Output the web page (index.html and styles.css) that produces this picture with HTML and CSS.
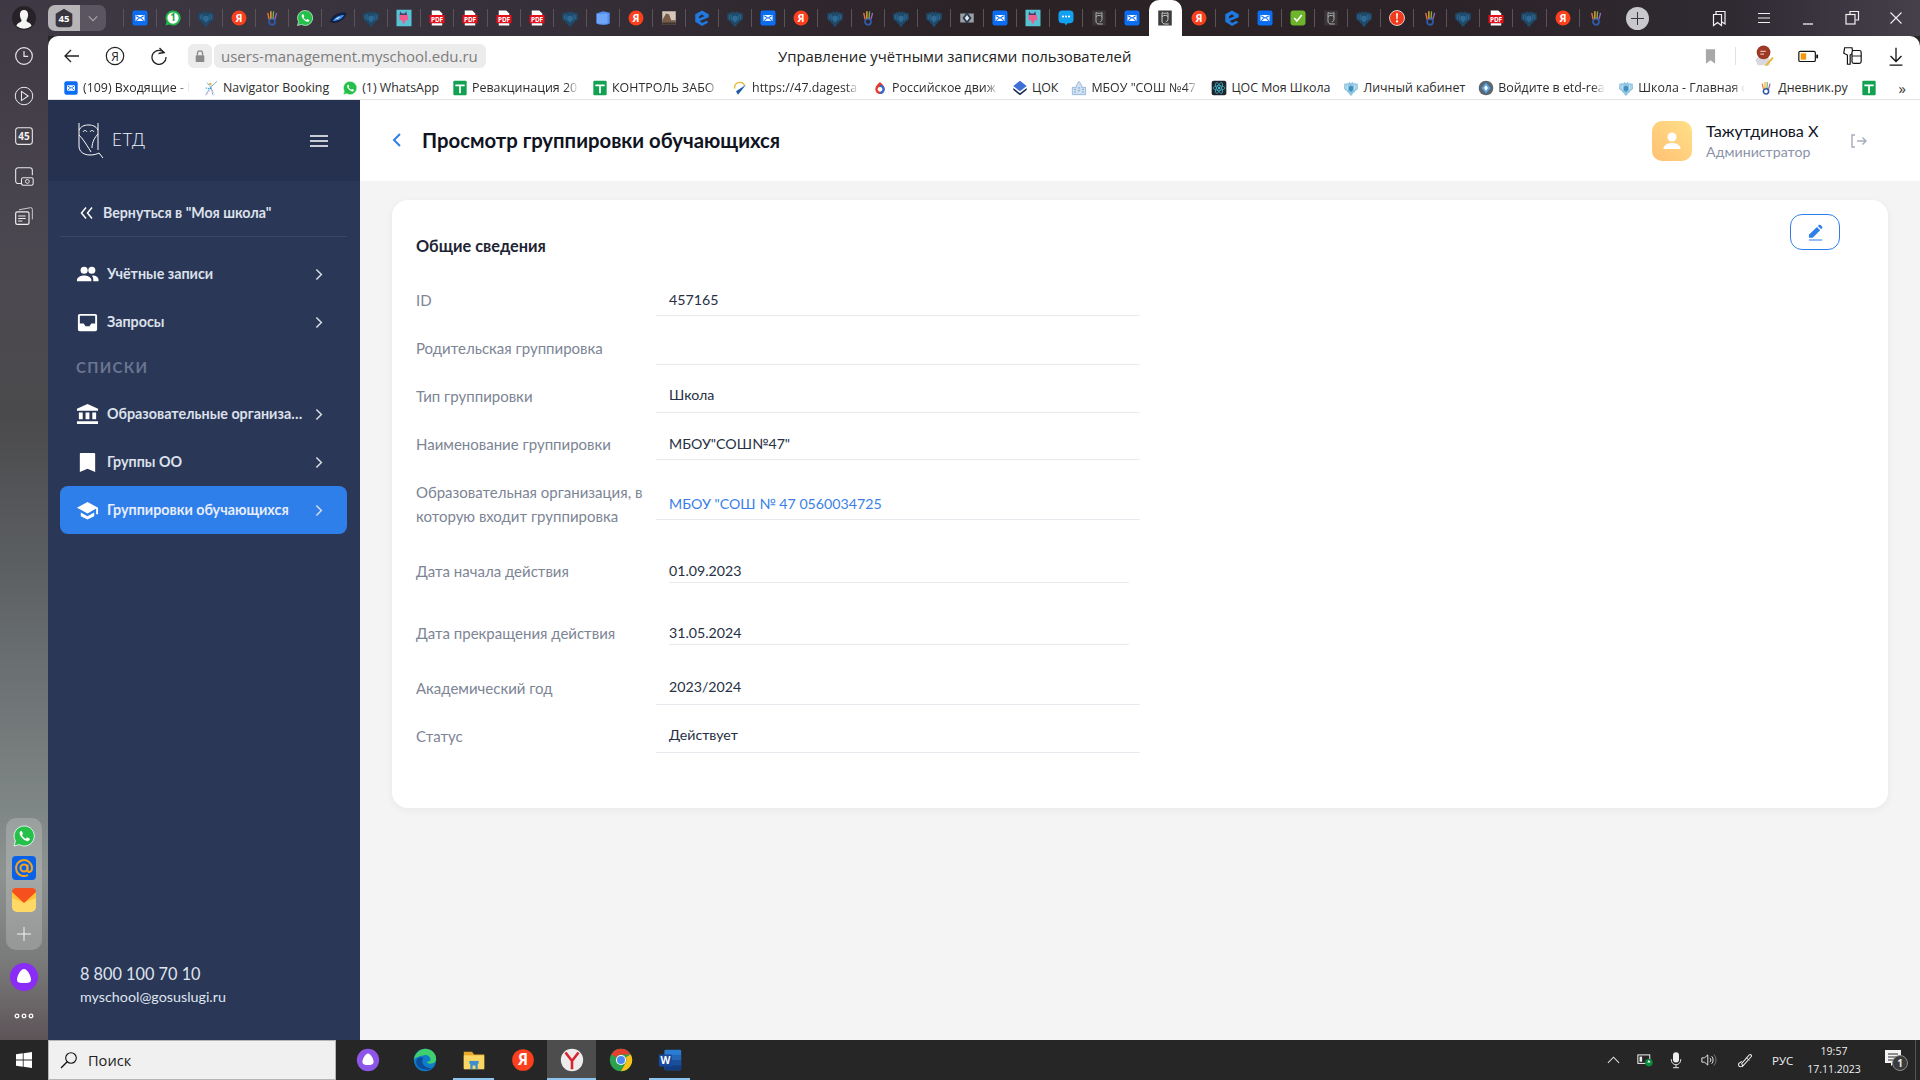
FILE: index.html
```html
<!DOCTYPE html>
<html lang="ru">
<head>
<meta charset="utf-8">
<title>Управление учётными записями пользователей</title>
<link rel="stylesheet" href="styles.css">
</head>
<body>
<svg class="sprite" xmlns="http://www.w3.org/2000/svg">
  <symbol id="mail" viewBox="0 0 24 24"><rect x="2" y="2" width="20" height="20" rx="3" fill="#0b6df2"/><path d="M6 8h12v8H6z" fill="#fff"/><path d="M7 9l5 3.2L17 9M7 15.500l3.200-3M17 15.500l-3.200-3" fill="none" stroke="#0b6df2" stroke-width="1.400"/></symbol>
  <symbol id="wa" viewBox="0 0 24 24"><path d="M12 2a10 10 0 0 0-8.600 15L2 22l5.200-1.400A10 10 0 1 0 12 2z" fill="#25c04a" stroke="#fff" stroke-width=".8"/><path d="M8.800 7c-.6.300-1.400 1.300-1.200 2.800.3 2 3.900 6.600 7.300 7.300 1.400.2 2.500-.6 2.900-1.500.2-.5 0-1-.3-1.100l-2-1c-.4-.1-.7 0-.9.300l-.7.900c-1.500-.5-3.200-2.100-3.900-3.700l.7-.8c.2-.3.2-.6.100-.9l-.9-2c-.2-.4-.6-.4-1.100-.3z" fill="#fff"/></symbol>
  <symbol id="wa1" viewBox="0 0 24 24"><path d="M12 2a10 10 0 0 0-8.600 15L2 22l5.200-1.400A10 10 0 1 0 12 2z" fill="#25b84a"/><circle cx="12" cy="12" r="7.500" fill="#fff"/><text x="12" y="16.500" text-anchor="middle" class="svgt" font-size="13" font-weight="700" fill="#1f9e3e">1</text></symbol>
  <symbol id="gerb" viewBox="0 0 24 24"><path d="M9 2.500l3 2.500 3-2.500 .5 3L18 4l1.500 2L22 5l.5 8-2 2.500-2 .5-1.500 3-2 .5-1 3-2 1-2-1-1-3-2-.5L5.500 16l-2-.5-2-2.500L2 5l2.500 1L6 4l2.500 1.500z" fill="#1f4a6a"/><path d="M12 8.500l3.500 1.500v4.500L12 18l-3.500-3.500V10z" fill="#2f6a94"/><path d="M4.500 8v5.500M7 7v8M17 7v8M19.500 8v5.500" stroke="#35709a" stroke-width="1"/></symbol>
  <symbol id="gerbl" viewBox="0 0 24 24"><path d="M9 2.500l3 2.500 3-2.500 .5 3L18 4l1.500 2L22 5l.5 8-2 2.500-2 .5-1.500 3-2 .5-1 3-2 1-2-1-1-3-2-.5L5.500 16l-2-.5-2-2.500L2 5l2.500 1L6 4l2.500 1.500z" fill="#8cc4e0"/><path d="M12 8.500l3.500 1.500v4.500L12 18l-3.500-3.500V10z" fill="#3f8fc0"/><path d="M4.500 8v5.500M7 7v8M17 7v8M19.500 8v5.500" stroke="#e8f4fa" stroke-width="1"/></symbol>
  <symbol id="ya" viewBox="0 0 24 24"><circle cx="12" cy="12" r="10" fill="#fc3f1d"/><text x="12" y="17" text-anchor="middle" class="svgt" font-size="14" font-weight="700" fill="#fff">Я</text></symbol>
  <symbol id="hand" viewBox="0 0 24 24"><circle cx="12" cy="17" r="4" fill="none" stroke="#2f5aa8" stroke-width="2.400"/><path d="M8 13L6.500 6" stroke="#e8743b" stroke-width="1.800" stroke-linecap="round"/><path d="M10.500 12V3.500" stroke="#e9b23c" stroke-width="1.800" stroke-linecap="round"/><path d="M13.500 12l.5-8" stroke="#7bb04a" stroke-width="1.800" stroke-linecap="round"/><path d="M16 13l2-7" stroke="#9a63b5" stroke-width="1.800" stroke-linecap="round"/></symbol>
  <symbol id="blob" viewBox="0 0 24 24"><path d="M1 17C3 9 12 3 23 5c1 4-5 11-12 13-4 1-8 .5-10-1z" fill="#12213f"/><path d="M5 16c3-5 9-8 15-8-2 5-8 8-15 8z" fill="#3a8df5"/><path d="M8 14c2-2 5-3 7-4-1 2-4 3.500-7 4z" fill="#fff"/></symbol>
  <symbol id="pink" viewBox="0 0 24 24"><rect x="2" y="1" width="20" height="22" fill="#58c3d4"/><path d="M6 8h11l1 7h-4l-2 6-3-6H6z" fill="#ef5d8c"/><path d="M7 3l2 3h4l2-3 1 5H6z" fill="#4b3a66"/></symbol>
  <symbol id="pdf" viewBox="0 0 24 24"><path d="M5 2h10l4 4v5H5z" fill="#fff"/><rect x="2" y="8" width="20" height="11" fill="#e2111c"/><path d="M5 19h14v3H5z" fill="#fff"/><text x="12" y="17" text-anchor="middle" class="svgt" font-size="8.500" font-weight="700" fill="#fff">PDF</text></symbol>
  <symbol id="box" viewBox="0 0 24 24"><path d="M3 6l9-3 9 2v14c-3 3-14 3-18 0z" fill="#4f8ff0"/><path d="M4 7l14-1v13c-4 1-10 1-14 0z" fill="#6fa6f7"/></symbol>
  <symbol id="photo" viewBox="0 0 24 24"><rect x="3" y="3" width="18" height="18" fill="#d4c7b8"/><path d="M3 15l5-9 4 1 3 8h6v6H3z" fill="#7a5c4a"/><rect x="3" y="18" width="18" height="3" fill="#3e3330"/></symbol>
  <symbol id="edu" viewBox="0 0 24 24"><path d="M12 2l9 5v4L9 16l3 2.500 6-3 2.500 2.500L12 22.500 3 17V7zM8 10v2.500l7-3L12 7z" fill="#1f79e0"/></symbol>
  <symbol id="cam" viewBox="0 0 24 24"><path d="M3 6h18v12H3z" fill="#9aa1a6"/><path d="M12 4l6 8-6 8-6-8z" fill="#2a3b4c"/><path d="M12 8l3 4-3 4-3-4z" fill="#dfe8ee"/></symbol>
  <symbol id="chat" viewBox="0 0 24 24"><path d="M7 2h10a5 5 0 0 1 5 5v7a5 5 0 0 1-5 5h-3l-2 3-2-3H7a5 5 0 0 1-5-5V7a5 5 0 0 1 5-5z" fill="#12a0f0"/><g fill="#fff"><circle cx="8" cy="10" r="1.400"/><circle cx="12" cy="10" r="1.400"/><circle cx="16" cy="10" r="1.400"/></g></symbol>
  <symbol id="owlg" viewBox="0 0 24 24"><rect x="3" y="2" width="18" height="20" fill="#3a3638"/><path d="M8 5v11c0 3 2 4 4 4h5M8 5c3 1 6 1 8 0v8c0 2-1 4-3 4M8 10c3-2 6-2 8 0" fill="none" stroke="#bbb" stroke-width="1.200"/></symbol>
  <symbol id="owlw" viewBox="0 0 24 24"><rect x="3" y="2" width="18" height="20" fill="#3c3c3c"/><path d="M8 5v11c0 3 2 4 4 4h5M8 5c3 1 6 1 8 0v8c0 2-1 4-3 4M8 10c3-2 6-2 8 0" fill="none" stroke="#ddd" stroke-width="1.200"/></symbol>
  <symbol id="check" viewBox="0 0 24 24"><rect x="2" y="2" width="20" height="20" rx="4" fill="#6eb52c"/><path d="M7 12l3.500 4L17 8" fill="none" stroke="#fff" stroke-width="2"/></symbol>
  <symbol id="alert" viewBox="0 0 24 24"><circle cx="12" cy="12" r="10" fill="#f03a1e" stroke="#fff" stroke-width="1"/><path d="M10.800 5.500h2.400l-.4 8h-1.600z" fill="#fff"/><circle cx="12" cy="16.500" r="1.500" fill="#fff"/></symbol>
  <symbol id="sheet" viewBox="0 0 24 24"><rect x="2" y="1" width="20" height="22" rx="1.500" fill="#12a150"/><path d="M5 8h14M12 8v12" stroke="#fff" stroke-width="2.600"/></symbol>
  <symbol id="nav" viewBox="0 0 24 24"><path d="M4 22l7-11M11 11l10-9M12 11l3 12M6 4l6 7M12 13l-8-1" stroke="#2f9fd8" stroke-width="1.500" stroke-dasharray="2 1" fill="none"/><path d="M5 23l6-9M12 10l7-6M13 13l4 9" stroke="#e0568a" stroke-width="1.300" stroke-dasharray="1 2" fill="none"/><circle cx="11" cy="6" r="2" fill="#e6b93a"/></symbol>
  <symbol id="dag" viewBox="0 0 24 24"><path d="M4 13a8 8 0 0 1 15-5" fill="none" stroke="#e6b93a" stroke-width="2"/><path d="M21 7L9 22l-3-5z" fill="#1f5aa8"/></symbol>
  <symbol id="rdd" viewBox="0 0 24 24"><path d="M12 3c5 4 7 7 7 11a7 7 0 0 1-14 0c0-4 2-7 7-11z" fill="#e23b2e"/><path d="M12 7a7 7 0 0 1 7 7 7 7 0 0 1-7 7z" fill="#2f6bd0"/><circle cx="12" cy="14" r="3.500" fill="#fff"/></symbol>
  <symbol id="cok" viewBox="0 0 24 24"><path d="M12 1l10 8-10 8L2 9z" fill="#3d6fd6"/><path d="M2 12l10 8 10-8v3l-10 8-10-8z" fill="#1a2a4a"/></symbol>
  <symbol id="school" viewBox="0 0 24 24"><path d="M12 2l4 6v3h6v11H2V11h6V8z" fill="#cfe0f2" stroke="#7aa5d0" stroke-width="1"/><path d="M5 14h2M5 18h2M11 12h2M11 16h2M17 14h2M17 18h2" stroke="#5b8bbd" stroke-width="1.500"/></symbol>
  <symbol id="react" viewBox="0 0 24 24"><rect x="1" y="1" width="22" height="22" rx="3" fill="#20242c"/><g fill="none" stroke="#45c4d8" stroke-width="1"><ellipse cx="12" cy="12" rx="9" ry="3.500"/><ellipse cx="12" cy="12" rx="9" ry="3.500" transform="rotate(60 12 12)"/><ellipse cx="12" cy="12" rx="9" ry="3.500" transform="rotate(120 12 12)"/></g><circle cx="12" cy="12" r="1.800" fill="#45c4d8"/></symbol>
  <symbol id="etd" viewBox="0 0 24 24"><circle cx="12" cy="12" r="11" fill="#5c6670"/><path d="M12 4l7 8-7 8-7-8z" fill="#5aa4e0"/><path d="M12 8l3 4-3 4-3-4z" fill="#fff"/></symbol>
  <symbol id="chev" viewBox="0 0 24 24"><path d="M9 5l7 7-7 7" fill="none" stroke="currentColor" stroke-width="2.200"/></symbol>
</svg>

<div class="screen">
  <div class="workspace">
    <aside class="rail">
      <div class="rail-top">
        <svg class="r-avatar" viewBox="0 0 24 24"><circle cx="12" cy="12" r="12" fill="#262228"/><path d="M12 4c-3 0-4.500 2.500-4 6 .3 2 1 3 1.500 4l-.2 1.500C7 17 5 17 4.500 20A12 12 0 0 0 19.500 20c-.5-3-2.500-3-4.800-4.500L14.500 14c.5-1 1.200-2 1.500-4 .5-3.500-1-6-4-6z" fill="#f4f4f4"/></svg>
        <svg class="r-ic" viewBox="0 0 24 24"><circle cx="12" cy="12" r="10" fill="none" stroke="#e8e8e8" stroke-width="1.400"/><path d="M12 6v6.500h5" fill="none" stroke="#e8e8e8" stroke-width="1.400"/></svg>
        <svg class="r-ic" viewBox="0 0 24 24"><circle cx="12" cy="12" r="10.500" fill="none" stroke="#e8e8e8" stroke-width="1.200"/><path d="M9 6.500l8 5.500-8 5.500z" fill="none" stroke="#e8e8e8" stroke-width="1.300"/></svg>
        <svg class="r-ic" viewBox="0 0 24 24"><rect x="2" y="2" width="20" height="20" rx="3" fill="none" stroke="#e8e8e8" stroke-width="1.300"/><text x="12" y="16.500" text-anchor="middle" class="svgt" font-size="12" font-weight="700" fill="#f0f0f0">45</text></svg>
        <svg class="r-ic" viewBox="0 0 24 24"><path d="M9 21H5a3 3 0 0 1-3-3V5a3 3 0 0 1 3-3h14a3 3 0 0 1 3 3v6" fill="none" stroke="#e8e8e8" stroke-width="1.300"/><rect x="9" y="14" width="14" height="9" rx="2" fill="none" stroke="#e8e8e8" stroke-width="1.300"/><circle cx="16" cy="18.500" r="2.300" fill="none" stroke="#e8e8e8" stroke-width="1.200"/></svg>
        <svg class="r-ic" viewBox="0 0 24 24"><rect x="2" y="7" width="16" height="15" rx="2" fill="none" stroke="#f0f0f0" stroke-width="1.400"/><path d="M6 4.500l14-2.500a2 2 0 0 1 2 2v12" fill="none" stroke="#d8d8d8" stroke-width="1.100"/><path d="M5 12h9M5 15h9M5 18h5" stroke="#f0f0f0" stroke-width="1.200"/></svg>
      </div>
      <div class="rail-bottom">
        <div class="dock">
          <svg class="d-ic"><use href="#wa"/></svg>
          <svg class="d-ic" viewBox="0 0 24 24"><rect width="24" height="24" rx="4" fill="#0a62e8"/><circle cx="12" cy="12" r="3.500" fill="none" stroke="#f7a21b" stroke-width="2"/><path d="M15.500 8.500V14c0 3 4.500 2.500 4.500-2a8 8 0 1 0-4 7" fill="none" stroke="#f7a21b" stroke-width="2"/></svg>
          <svg class="d-ic" viewBox="0 0 24 24"><rect width="24" height="24" rx="5" fill="#ffd966"/><path d="M0 5a5 5 0 0 1 5-5h14a5 5 0 0 1 5 5v5l-12 5L0 10z" fill="#ffc23a"/><path d="M0 4a4 4 0 0 1 4-4h16a4 4 0 0 1 4 4L12 15z" fill="#f5501e"/></svg>
          <svg class="d-plus" viewBox="0 0 16 16"><path d="M8 0v16M0 8h16" stroke="#fff" stroke-width="1"/></svg>
        </div>
        <svg class="alice" viewBox="0 0 28 28"><circle cx="14" cy="14" r="14" fill="#8a2cf5"/><path d="M14 6c3.500 0 7 7 7 10.500S18 20 14 20s-7 0-7-3.500S10.500 6 14 6z" fill="#fff"/></svg>
        <svg class="r-dots" viewBox="0 0 20 6"><g fill="none" stroke="#fff" stroke-width="1.300"><circle cx="3" cy="3" r="1.800"/><circle cx="10" cy="3" r="1.800"/><circle cx="17" cy="3" r="1.800"/></g></svg>
      </div>
    </aside>

    <div class="browser">
      <div class="tabstrip">
        <div class="tabs-counter">
          <span class="tc-main"><svg viewBox="0 0 24 24"><path d="M12 1l10 6v12a4 4 0 0 1-4 4H6a4 4 0 0 1-4-4V7z" fill="#3a3640"/><text x="12" y="17" text-anchor="middle" class="svgt" font-size="11.500" font-weight="700" fill="#fff">45</text></svg></span>
          <span class="tc-more"><svg viewBox="0 0 12 8"><path d="M1 1.500l5 5 5-5" fill="none" stroke="#a8a6aa" stroke-width="1.400"/></svg></span>
        </div>
        <div class="tabs">
          <span class="tab"><svg><use href="#mail"/></svg></span>
          <span class="tab"><svg><use href="#wa1"/></svg></span>
          <span class="tab"><svg><use href="#gerb"/></svg></span>
          <span class="tab"><svg><use href="#ya"/></svg></span>
          <span class="tab"><svg><use href="#hand"/></svg></span>
          <span class="tab"><svg><use href="#wa"/></svg></span>
          <span class="tab"><svg><use href="#blob"/></svg></span>
          <span class="tab"><svg><use href="#gerb"/></svg></span>
          <span class="tab"><svg><use href="#pink"/></svg></span>
          <span class="tab"><svg><use href="#pdf"/></svg></span>
          <span class="tab"><svg><use href="#pdf"/></svg></span>
          <span class="tab"><svg><use href="#pdf"/></svg></span>
          <span class="tab"><svg><use href="#pdf"/></svg></span>
          <span class="tab"><svg><use href="#gerb"/></svg></span>
          <span class="tab"><svg><use href="#box"/></svg></span>
          <span class="tab"><svg><use href="#ya"/></svg></span>
          <span class="tab"><svg><use href="#photo"/></svg></span>
          <span class="tab"><svg><use href="#edu"/></svg></span>
          <span class="tab"><svg><use href="#gerb"/></svg></span>
          <span class="tab"><svg><use href="#mail"/></svg></span>
          <span class="tab"><svg><use href="#ya"/></svg></span>
          <span class="tab"><svg><use href="#gerb"/></svg></span>
          <span class="tab"><svg><use href="#hand"/></svg></span>
          <span class="tab"><svg><use href="#gerb"/></svg></span>
          <span class="tab"><svg><use href="#gerb"/></svg></span>
          <span class="tab"><svg><use href="#cam"/></svg></span>
          <span class="tab"><svg><use href="#mail"/></svg></span>
          <span class="tab"><svg><use href="#pink"/></svg></span>
          <span class="tab"><svg><use href="#chat"/></svg></span>
          <span class="tab"><svg><use href="#owlg"/></svg></span>
          <span class="tab tab-pre"><svg><use href="#mail"/></svg></span>
          <span class="tab tab-active"><svg><use href="#owlw"/></svg></span>
          <span class="tab tab-post"><svg><use href="#ya"/></svg></span>
          <span class="tab"><svg><use href="#edu"/></svg></span>
          <span class="tab"><svg><use href="#mail"/></svg></span>
          <span class="tab"><svg><use href="#check"/></svg></span>
          <span class="tab"><svg><use href="#owlg"/></svg></span>
          <span class="tab"><svg><use href="#gerb"/></svg></span>
          <span class="tab"><svg><use href="#alert"/></svg></span>
          <span class="tab"><svg><use href="#hand"/></svg></span>
          <span class="tab"><svg><use href="#gerb"/></svg></span>
          <span class="tab"><svg><use href="#pdf"/></svg></span>
          <span class="tab"><svg><use href="#gerb"/></svg></span>
          <span class="tab"><svg><use href="#ya"/></svg></span>
          <span class="tab"><svg><use href="#hand"/></svg></span>
        </div>
        <span class="newtab"><svg viewBox="0 0 14 14"><path d="M7 0v14M0 7h14" stroke="#3a3640" stroke-width="1.100"/></svg></span>
        <div class="winctl">
          <svg viewBox="0 0 18 18"><path d="M5 5V2.500h9V15l-3-2" fill="none" stroke="#f0f0f0" stroke-width="1.200"/><path d="M2.500 5.500h8v11l-4-3-4 3z" fill="#2d2630" stroke="#f0f0f0" stroke-width="1.200"/></svg>
          <svg viewBox="0 0 18 18"><path d="M3 4.500h12M3 9h12M3 13.500h12" stroke="#f0f0f0" stroke-width="1.200"/></svg>
          <svg viewBox="0 0 18 18"><path d="M4 15h10" stroke="#f0f0f0" stroke-width="1.300"/></svg>
          <svg viewBox="0 0 18 18"><path d="M7 5V2.500h8.500V11H12.500" fill="none" stroke="#f0f0f0" stroke-width="1.200"/><rect x="3" y="5.500" width="9" height="9.500" fill="none" stroke="#f0f0f0" stroke-width="1.200"/></svg>
          <svg viewBox="0 0 18 18"><path d="M3.500 3.500l11 11M14.500 3.500l-11 11" stroke="#f0f0f0" stroke-width="1.100"/></svg>
        </div>
      </div>

      <div class="pagewrap">
        <div class="toolbar">
          <svg class="tb-ic tb-back" viewBox="0 0 18 18"><path d="M16 9H2M8 3L2 9l6 6" fill="none" stroke="#222" stroke-width="1.300"/></svg>
          <svg class="tb-ic tb-ya" viewBox="0 0 20 20"><circle cx="10" cy="10" r="8.700" fill="none" stroke="#222" stroke-width="1.200"/><text x="10" y="14.500" text-anchor="middle" class="svgt" font-size="12" fill="#222">Я</text></svg>
          <svg class="tb-ic tb-re" viewBox="0 0 18 18"><path d="M14.500 6A7 7 0 1 0 16 10" fill="none" stroke="#222" stroke-width="1.300"/><path d="M9.500 1l4.500 4.500-5.500 1" fill="none" stroke="#222" stroke-width="1.300"/></svg>
          <span class="lock"><svg viewBox="0 0 14 16"><path d="M4 7V5a3 3 0 0 1 6 0v2" fill="none" stroke="#8a8a8a" stroke-width="1.500"/><rect x="2" y="7" width="10" height="8" rx="1" fill="#8a8a8a"/></svg></span>
          <span class="url">users-management.myschool.edu.ru</span>
          <div class="pagetitle">Управление учётными записями пользователей</div>
          <div class="tb-right">
            <svg class="tb-mark" viewBox="0 0 12 16"><path d="M1 0h10v16l-5-4-5 4z" fill="#a8a8a8"/></svg>
            <span class="tb-sep"></span>
            <svg class="tb-ext" viewBox="0 0 24 24"><path d="M3 17c0-3 2-3 4-3h8c2 0 3 1 3 3v5H5z" fill="#d8d8de"/><circle cx="11.500" cy="8" r="7.500" fill="#9c3a26"/><path d="M8 7h6M8 10h4" stroke="#e9b7a5" stroke-width="1.200"/><path d="M14 21l7-8 1.500 1.500-7 8-2.500.5z" fill="#e8b730"/></svg>
            <svg class="tb-ext" viewBox="0 0 24 24"><rect x="2" y="7" width="18" height="11" rx="1.500" fill="#fff" stroke="#111" stroke-width="1.300"/><rect x="4" y="9" width="6" height="7" fill="#f29a0e"/><rect x="21" y="10.500" width="2" height="4" fill="#111"/></svg>
            <svg class="tb-ext" viewBox="0 0 24 24"><path d="M4 3h8l1 6-3 2v10H7V11L3 9z" fill="none" stroke="#111" stroke-width="1.300"/><rect x="12" y="6" width="10" height="14" rx="2" fill="#fff" stroke="#111" stroke-width="1.300"/><path d="M12 12h10" stroke="#111" stroke-width="1"/></svg>
            <svg class="tb-ext" viewBox="0 0 24 24"><path d="M12 3v15M6 12l6 6 6-6M5 22h14" fill="none" stroke="#111" stroke-width="1.400"/></svg>
          </div>
        </div>
        <div class="bookmarks">
          <a class="bm"><svg><use href="#mail"/></svg><span class="bm-t fade">(109) Входящие - П</span></a>
          <a class="bm"><svg><use href="#nav"/></svg><span class="bm-t">Navigator Booking</span></a>
          <a class="bm"><svg><use href="#wa"/></svg><span class="bm-t">(1) WhatsApp</span></a>
          <a class="bm"><svg><use href="#sheet"/></svg><span class="bm-t fade">Ревакцинация 20</span></a>
          <a class="bm"><svg><use href="#sheet"/></svg><span class="bm-t fade">КОНТРОЛЬ ЗАБО</span></a>
          <a class="bm"><svg><use href="#dag"/></svg><span class="bm-t fade">https://47.dagesta</span></a>
          <a class="bm"><svg><use href="#rdd"/></svg><span class="bm-t fade">Российское движ</span></a>
          <a class="bm"><svg><use href="#cok"/></svg><span class="bm-t">ЦОК</span></a>
          <a class="bm"><svg><use href="#school"/></svg><span class="bm-t fade">МБОУ "СОШ №47</span></a>
          <a class="bm"><svg><use href="#react"/></svg><span class="bm-t">ЦОС Моя Школа</span></a>
          <a class="bm"><svg><use href="#gerbl"/></svg><span class="bm-t">Личный кабинет</span></a>
          <a class="bm"><svg><use href="#etd"/></svg><span class="bm-t fade">Войдите в etd-rea</span></a>
          <a class="bm"><svg><use href="#gerbl"/></svg><span class="bm-t fade">Школа - Главная с</span></a>
          <a class="bm"><svg><use href="#hand"/></svg><span class="bm-t">Дневник.ру</span></a>
          <a class="bm"><svg><use href="#sheet"/></svg></a>
          <span class="bm-more">»</span>
        </div>

        <div class="app">
          <nav class="sidebar">
            <div class="side-head">
              <div class="logo">
                <svg viewBox="0 0 27 37"><g fill="none" stroke="#fff" stroke-width="1"><path d="M1 1v23c0 6 5 9 11 9 4 0 7-1 9-2l4 5"/><path d="M20 1v27"/><path d="M1 8c3-5 7-5 10-5s7 1 9 5"/><path d="M1 13c3 3 6 7 12 17M20 12c-3 3-6 8-6 14"/><path d="M5 10c1-2 3-2 4 0M12 10c1-2 3-2 4 0"/></g></svg>
                <span class="logo-t">ЕТД</span>
              </div>
              <svg class="burger" viewBox="0 0 18 12"><path d="M0 1h18M0 6h18M0 11h18" stroke="#fff" stroke-width="1.600"/></svg>
            </div>
            <div class="side-body">
              <a class="back-link"><svg viewBox="0 0 14 14"><path d="M6 1.500L1.500 7 6 12.500M12 1.500L7.500 7l4.500 5.500" fill="none" stroke="#fff" stroke-width="1.500"/></svg><span>Вернуться в "Моя школа"</span></a>
              <ul class="menu">
                <li class="item"><svg class="item-ic" viewBox="0 0 24 24"><g fill="#fff"><circle cx="8.500" cy="7.500" r="3.700"/><circle cx="16.500" cy="7.500" r="3.700"/><path d="M1 19v-1.500c0-3 5-4.500 7.500-4.500s7.500 1.500 7.500 4.500V19z"/><path d="M17.500 13.100c2.500.1 6 1.400 6 4.400V19H18v-2c0-1.500-.5-3-1.600-3.800z"/></g></svg><span class="item-t">Учётные записи</span><svg class="item-ch"><use href="#chev"/></svg></li>
                <li class="item"><svg class="item-ic" viewBox="0 0 24 24"><path d="M4 3h16a2 2 0 0 1 2 2v14a2 2 0 0 1-2 2H4a2 2 0 0 1-2-2V5a2 2 0 0 1 2-2z" fill="#fff"/><path d="M4 5h16v8h-4l-2 3h-4l-2-3H4z" fill="#2b3756"/></svg><span class="item-t">Запросы</span><svg class="item-ch"><use href="#chev"/></svg></li>
                <li class="section">Списки</li>
                <li class="item"><svg class="item-ic" viewBox="0 0 24 24"><path d="M12 1L1 6v2h22V6zM3 10h4v7H3zM10 10h4v7h-4zM17 10h4v7h-4zM1 19h22v3H1z" fill="#fff"/></svg><span class="item-t">Образовательные организации</span><svg class="item-ch"><use href="#chev"/></svg></li>
                <li class="item"><svg class="item-ic" viewBox="0 0 24 24"><path d="M5 2h14a1 1 0 0 1 1 1v19l-8-3.500L4 22V3a1 1 0 0 1 1-1z" fill="#fff"/></svg><span class="item-t">Группы ОО</span><svg class="item-ch"><use href="#chev"/></svg></li>
                <li class="item active"><svg class="item-ic" viewBox="0 0 24 24"><path d="M12 3L1 9l11 6 9-5v6h2V9z" fill="#fff"/><path d="M5 14v4l7 3.500 7-3.500v-4l-7 4z" fill="#fff"/></svg><span class="item-t">Группировки обучающихся</span><svg class="item-ch"><use href="#chev"/></svg></li>
              </ul>
              <div class="contacts">
                <div class="phone">8 800 100 70 10</div>
                <div class="email">myschool@gosuslugi.ru</div>
              </div>
            </div>
          </nav>

          <main class="main">
            <header class="main-head">
              <svg class="head-back" viewBox="0 0 10 14"><path d="M8 1L2 7l6 6" fill="none" stroke="#2f7fea" stroke-width="2"/></svg>
              <h1>Просмотр группировки обучающихся</h1>
              <div class="user">
                <span class="avatar"><svg viewBox="0 0 24 24"><circle cx="12" cy="8" r="4.500" fill="#fff"/><path d="M3.500 20c0-4 4-6 8.500-6s8.500 2 8.500 6z" fill="#fff"/></svg></span>
                <div class="user-t">
                  <div class="user-name">Тажутдинова Х</div>
                  <div class="user-role">Администратор</div>
                </div>
                <svg class="logout" viewBox="0 0 16 14"><path d="M4 1H1v12h3" fill="none" stroke="#a8afbd" stroke-width="1.500"/><path d="M6 7h9M11.500 3.500L15 7l-3.500 3.500" fill="none" stroke="#a8afbd" stroke-width="1.500"/></svg>
              </div>
            </header>
            <section class="card">
              <div class="card-head">
                <h2>Общие сведения</h2>
                <button class="edit" type="button"><svg viewBox="0 0 16 18"><path d="M1 11.500L9.500 3l3.500 3.500L5 14.500H1z" fill="#2f7fea"/><path d="M10.500 2l1-1c.5-.5 1.300-.5 1.800 0l1.700 1.700c.5.5.5 1.300 0 1.800l-1 1z" fill="#2f7fea"/><path d="M1 17h14" stroke="#2f7fea" stroke-width="1.300"/></svg></button>
              </div>
              <div class="row r1"><div class="lbl">ID</div><div class="val">457165</div></div>
              <div class="row r2"><div class="lbl">Родительская группировка</div><div class="val"></div></div>
              <div class="row r3"><div class="lbl">Тип группировки</div><div class="val">Школа</div></div>
              <div class="row r4"><div class="lbl">Наименование группировки</div><div class="val">МБОУ"СОШ№47"</div></div>
              <div class="row r5"><div class="lbl">Образовательная организация, в которую входит группировка</div><div class="val"><a class="link">МБОУ "СОШ № 47 0560034725</a></div></div>
              <div class="row r6"><div class="lbl">Дата начала действия</div><div class="val date">01.09.2023</div></div>
              <div class="row r7"><div class="lbl">Дата прекращения действия</div><div class="val date">31.05.2024</div></div>
              <div class="row r8"><div class="lbl">Академический год</div><div class="val">2023/2024</div></div>
              <div class="row r3"><div class="lbl">Статус</div><div class="val">Действует</div></div>
            </section>
          </main>
        </div>
      </div>
    </div>
  </div>

  <footer class="taskbar">
    <span class="start"><svg viewBox="0 0 16 16"><path d="M0 2.300L6.800 1.300v6.300H0zM7.600 1.200L16 0v7.600H7.600zM0 8.400h6.800v6.300L0 13.700zM7.600 8.400H16V16l-8.400-1.200z" fill="#fff"/></svg></span>
    <div class="search"><svg viewBox="0 0 18 18"><circle cx="11" cy="7" r="5.300" fill="none" stroke="#111" stroke-width="1.100"/><path d="M7.200 10.800L1 17" stroke="#111" stroke-width="1.300"/></svg><span>Поиск</span></div>
    <div class="apps">
      <span class="app-ic a-alice"><svg viewBox="0 0 28 28"><circle cx="14" cy="14" r="12" fill="#8e56e8"/><path d="M14 7c3 0 6 6 6 9s-3 3.500-6 3.500S8 19 8 16s3-9 6-9z" fill="#fff"/></svg></span>
      <span class="app-ic a-edge"><svg viewBox="0 0 28 28"><circle cx="14" cy="14" r="12" fill="#0f7cc9"/><path d="M2 14C3 6 10 2 14 2c7 0 12 5 12 11 0 4-4 5-7 5-2 0-3-1-3-2 3 0 4-1 4-3-1-3-4-5-7-4C7 10 3 12 2 14z" fill="#3fcf6f"/><path d="M9 23c-4-2-5-6-4-9 1-3 5-4 7-2-2 3-1 8 5 10 2 1 4 1 5 0-4 4-9 3-13 1z" fill="#0b4e9e"/></svg></span>
      <span class="app-ic a-files on"><svg viewBox="0 0 28 28"><path d="M3 5h9l2 3h11v15H3z" fill="#e8a92b"/><rect x="3" y="9" width="22" height="15" fill="#fcd664"/><path d="M10 24v-7h8v7h-2.500v-4h-3v4z" fill="#3b8ed0"/><rect x="9" y="15" width="10" height="3" fill="#3b8ed0"/></svg></span>
      <span class="app-ic a-ya"><svg><use href="#ya"/></svg></span>
      <span class="app-ic a-yb active"><svg viewBox="0 0 28 28"><circle cx="14" cy="14" r="12" fill="#ececec"/><path d="M7 6l7 9 7-9M14 15v9" fill="none" stroke="#d9232e" stroke-width="2.800"/></svg></span>
      <span class="app-ic a-chrome"><svg viewBox="0 0 28 28"><circle cx="14" cy="14" r="12" fill="#2ca24f"/><path d="M14 2a12 12 0 0 1 10.400 6H14a6 6 0 0 0-5.200 3L3.600 8A12 12 0 0 1 14 2z" fill="#e3412f"/><path d="M24.400 8A12 12 0 0 1 14 26l5.200-9A6 6 0 0 0 19.200 11z" fill="#fbc116"/><circle cx="14" cy="14" r="5.500" fill="#fff"/><circle cx="14" cy="14" r="4.300" fill="#4a8af4"/></svg></span>
      <span class="app-ic a-word on"><svg viewBox="0 0 28 28"><rect x="8" y="3" width="18" height="22" rx="1.500" fill="#2b7cd3"/><rect x="8" y="8.500" width="18" height="5.500" fill="#2566b8"/><rect x="8" y="14" width="18" height="5.500" fill="#1a4f9c"/><rect x="8" y="19.500" width="18" height="5.500" fill="#123d80"/><rect x="2" y="8" width="14" height="13" rx="1" fill="#174a9e"/><text x="9" y="18.500" text-anchor="middle" class="svgt" font-size="11" font-weight="700" fill="#fff">W</text></svg></span>
    </div>
    <div class="tray">
      <svg class="t-chev" viewBox="0 0 14 8"><path d="M1 7l6-6 6 6" fill="none" stroke="#ddd" stroke-width="1.200"/></svg>
      <svg class="t-bat" viewBox="0 0 20 16"><rect x="1" y="2" width="14" height="10" fill="none" stroke="#eee" stroke-width="1.200"/><rect x="3" y="4" width="3" height="6" fill="#eee"/><circle cx="14" cy="11" r="4.500" fill="#0a8a3c"/><path d="M14 8l2 3h-4z" fill="#fff"/></svg>
      <svg class="t-mic" viewBox="0 0 14 20"><rect x="3.500" y="1" width="7" height="12" rx="3.500" fill="#eee"/><path d="M1.500 9v1a5.500 5.500 0 0 0 11 0V9M7 15.500V19M3.500 19h7" fill="none" stroke="#eee" stroke-width="1.100"/></svg>
      <svg class="t-snd" viewBox="0 0 20 16"><path d="M1 5.500h3L8 2v12l-4-3.500H1z" fill="none" stroke="#eee" stroke-width="1.100"/><path d="M10.500 5.500a3.500 3.500 0 0 1 0 5M12.500 3.500a6.500 6.500 0 0 1 0 9" fill="none" stroke="#eee" stroke-width="1.100"/><path d="M15 1.500a9 9 0 0 1 0 13" fill="none" stroke="#777" stroke-width="1.100"/></svg>
      <svg class="t-pen" viewBox="0 0 18 16"><path d="M6 14c-4 2-5-1-4-3l3-2M6 14l9-10c1-1 0-3-2-2L5 11z" fill="none" stroke="#eee" stroke-width="1.100"/><path d="M10 5l3 3" stroke="#eee" stroke-width="1"/></svg>
      <span class="t-lang">РУС</span>
      <div class="t-clock"><div>19:57</div><div>17.11.2023</div></div>
      <span class="t-note"><svg viewBox="0 0 26 24"><path d="M3 2h16v13h-7l-3 3v-3H3z" fill="#f4f4f4"/><path d="M6 6h10M6 9h10M6 12h6" stroke="#262626" stroke-width="1"/><circle cx="18" cy="15" r="7.500" fill="#3b3b3b" stroke="#8a8a8a" stroke-width="1"/><text x="18" y="18.700" text-anchor="middle" class="svgt" font-size="10" font-weight="700" fill="#eee">1</text></svg></span>
    </div>
  </footer>
</div>
</body>
</html>
```

FILE: styles.css
```css
* { box-sizing: border-box; }
html, body { margin: 0; padding: 0; height: 100%; overflow: hidden; }
body { font-family: "Lato", "Noto Sans", sans-serif; color: #1d2433; background: #262626; }
h1, h2, ul { margin: 0; padding: 0; }
ul { list-style: none; }
.sprite { display: none; }
.svgt { font-family: "Open Sans", "Noto Sans", sans-serif; }

.screen { display: flex; flex-direction: column; width: 1920px; height: 1080px; }
.workspace { display: flex; height: 1040px; }
.rail {
  width: 48px; flex: none; display: flex; flex-direction: column; justify-content: space-between; align-items: center;
  background: linear-gradient(180deg, #3d3843 0, #4c4850 25%, #4a4a4c 40%, #5d6063 55%, #7f8786 78%, #8d9391 84%, #787878 93%, #5d5458 100%);
}
.rail-top { display: flex; flex-direction: column; align-items: center; padding-top: 6px; }
.r-avatar { width: 24px; height: 24px; margin-bottom: 16px; }
.r-ic { width: 20px; height: 20px; margin-bottom: 20px; }
.rail-bottom { display: flex; flex-direction: column; align-items: center; padding-bottom: 21px; }
.dock {
  width: 36px; height: 132px; display: flex; flex-direction: column; align-items: center; padding-top: 6px; gap: 8px;
  background: rgba(255,255,255,.2); border-radius: 10px; margin-bottom: 13px;
}
.d-ic { width: 24px; height: 24px; }
.d-plus { width: 14px; height: 14px; margin-top: 7px; }
.alice { width: 28px; height: 28px; margin-bottom: 22px; }
.r-dots { width: 20px; height: 6px; }

.browser { flex: 1; min-width: 0; display: flex; flex-direction: column; }
.tabstrip {
  height: 36px; flex: none; display: flex; align-items: center;
  background: linear-gradient(90deg, #3d3843 0, #36303a 25%, #2b2226 50%, #2c2328 75%, #2f2a32 90%, #45404a 100%);
}
.tabs-counter { display: flex; height: 26px; width: 58px; flex: none; }
.tc-main { width: 32px; height: 26px; background: #b8b5b8; border-radius: 7px 0 0 7px; display: flex; align-items: center; justify-content: center; }
.tc-main svg { width: 20px; height: 22px; }
.tc-more { width: 26px; background: #5a5560; border-radius: 0 7px 7px 0; display: flex; align-items: center; justify-content: center; }
.tc-more svg { width: 10px; height: 7px; }
.tabs { display: flex; align-items: center; height: 36px; margin-left: 17px; flex: none; }
.tab { width: 33.1px; height: 36px; flex: none; display: flex; align-items: center; justify-content: center; position: relative; }
.tab svg { width: 18px; height: 18px; }
.tab::before { content: ""; position: absolute; left: -.5px; top: 9px; height: 18px; width: 1px; background: #5a5458; }
.tab-active { background: #fff; border-radius: 10px 10px 0 0; }
.tab-active::before, .tab-post::before { display: none; }
.newtab { width: 23px; height: 23px; border-radius: 50%; background: #c9c8cc; display: flex; align-items: center; justify-content: center; margin-left: 14px; flex: none; }
.newtab svg { width: 13px; height: 13px; }
.winctl { margin-left: auto; display: flex; align-items: center; gap: 26px; padding-right: 15px; }
.winctl svg { width: 18px; height: 18px; }

.pagewrap { flex: 1; min-height: 0; background: #fff; border-radius: 10px 10px 0 0; display: flex; flex-direction: column; overflow: hidden; }
.toolbar { height: 40px; flex: none; display: flex; align-items: center; font-family: "Open Sans", "Noto Sans", sans-serif; }
.tb-ic { flex: none; }
.tb-back { width: 18px; height: 18px; margin-left: 15px; }
.tb-ya { width: 20px; height: 20px; margin-left: 24px; }
.tb-re { width: 18px; height: 18px; margin-left: 25px; }
.lock { width: 24px; height: 24px; margin-left: 20px; background: #ececec; border-radius: 6px; display: flex; align-items: center; justify-content: center; flex: none; }
.lock svg { width: 12px; height: 14px; }
.url { margin-left: 2px; height: 24px; width: 272px; flex: none; background: #ececec; border-radius: 6px; font-size: 15px; line-height: 24px; padding-left: 7px; color: #7c7c7c; white-space: nowrap; }
.pagetitle { margin-left: 292px; font-size: 14.9px; color: #222; white-space: nowrap; }
.tb-right { margin-left: auto; display: flex; align-items: center; padding-right: 13px; }
.tb-mark { width: 11px; height: 15px; margin-right: 19px; }
.tb-sep { width: 1px; height: 18px; background: #e2e2e2; margin-right: 17px; }
.tb-ext { width: 22px; height: 22px; margin-right: 22px; }
.tb-ext:last-child { margin-right: 0; }

.bookmarks { height: 24px; flex: none; display: flex; align-items: center; gap: 13px; padding-left: 15px; border-bottom: 1px solid #e3e3e3; font-family: "Open Sans", "Noto Sans", sans-serif; font-size: 12.4px; color: #2c2c2c; }
.bm { display: flex; align-items: center; gap: 4px; flex: none; }
.bm svg { width: 16px; height: 16px; flex: none; }
.bm-t { white-space: nowrap; display: block; }
.fade { width: 107px; -webkit-mask-image: linear-gradient(90deg, #000 88%, transparent); mask-image: linear-gradient(90deg, #000 88%, transparent); }
.bm-more { margin-left: auto; padding-right: 14px; font-size: 15px; color: #333; }

.app { flex: 1; min-height: 0; display: flex; }
.sidebar { width: 312px; flex: none; display: flex; flex-direction: column; background: #2b3756; color: #e3e7f0; }
.side-head { height: 81px; flex: none; background: #263150; display: flex; align-items: center; justify-content: space-between; padding: 0 32px 0 30px; }
.logo { display: flex; align-items: center; gap: 7px; }
.logo svg { width: 27px; height: 37px; }
.logo-t { font-size: 17px; font-weight: 300; color: #f2f4f8; letter-spacing: .6px; padding-bottom: 2px; }
.burger { width: 18px; height: 12px; }
.side-body { flex: 1; min-height: 0; display: flex; flex-direction: column; padding: 0 13px 0 12px; }
.back-link { height: 56px; display: flex; align-items: center; gap: 9px; padding: 8px 0 0 20px; border-bottom: 1px solid #3b4768; font-size: 14.2px; font-weight: 700; color: #dce1ec; }
.back-link svg { width: 14px; height: 14px; }
.menu { padding-top: 13px; flex: 1; }
.item { height: 48px; display: flex; align-items: center; padding-left: 16px; border-radius: 8px; font-size: 14.3px; font-weight: 700; color: #dce1ec; }
.item-ic { width: 23px; height: 23px; flex: none; margin-right: 8px; }
.item-t { width: 199px; white-space: nowrap; overflow: hidden; text-overflow: ellipsis; flex: none; padding-bottom: 2px; }
.item-ch { width: 17px; height: 17px; margin-left: 4px; color: #d7dbe5; flex: none; }
.item.active { background: #2f7fea; color: #e8eefb; }
.section { height: 44px; display: flex; align-items: center; padding: 0 0 2px 16px; font-size: 15px; font-weight: 700; text-transform: uppercase; letter-spacing: 1.3px; color: #6a7590; }
.contacts { padding: 0 0 32px 20px; color: #dfe4ef; }
.phone { font-size: 16.3px; line-height: 22px; }
.email { font-size: 14.3px; line-height: 22px; margin-top: 1px; }

.main { flex: 1; min-width: 0; background: #f4f4f4; display: flex; flex-direction: column; }
.main-head { height: 81px; flex: none; background: #fff; display: flex; align-items: center; padding: 0 53px 0 32px; }
.head-back { width: 10px; height: 14px; flex: none; margin-bottom: 2px; }
h1 { font-size: 20.3px; font-weight: 700; color: #10141f; margin-left: 20px; padding-bottom: 2px; white-space: nowrap; }
.user { margin-left: auto; display: flex; align-items: center; }
.avatar { width: 40px; height: 40px; border-radius: 10px; background: linear-gradient(45deg, #ffc074, #ffe087); display: flex; align-items: center; justify-content: center; }
.avatar svg { width: 24px; height: 24px; }
.user-t { margin-left: 14px; width: 145px; }
.user-name { font-size: 16.2px; line-height: 21px; color: #10141f; }
.user-role { font-size: 14.2px; line-height: 21px; color: #8a93a8; }
.logout { width: 16px; height: 14px; }

.card { margin: 19px 32px 0; width: 1496px; height: 608px; background: #fff; border-radius: 16px; box-shadow: 0 2px 8px rgba(30,40,70,.05); padding: 14px 48px 0 24px; }
.card-head { display: flex; justify-content: space-between; height: 44px; }
h2 { font-size: 16.3px; font-weight: 700; line-height: 22px; align-self: flex-end; margin-bottom: 1px; color: #1d2433; }
.edit { width: 50px; height: 36px; padding: 0; background: #fff; border: 1px solid #2f7fea; border-radius: 12px; display: flex; align-items: center; justify-content: center; }
.edit svg { width: 15px; height: 17px; }
.row { display: grid; grid-template-columns: 240px 484px; grid-template-rows: 1fr; font-size: 15px; line-height: 24px; }
.lbl { color: #7d8595; align-self: end; padding-bottom: 4px; }
.val { align-self: end; padding: 0 0 3px 13px; border-bottom: 1px solid #e9e9f0; color: #273044; min-height: 28px; font-size: 14.2px; }
.val.date { margin-left: 13px; padding-left: 0; width: 460px; }
.r1 { height: 58px; }
.r2 { height: 49px; }
.r2 .lbl { padding-bottom: 5px; }
.r3 { height: 48px; }
.r3 .lbl, .r8 .lbl { padding-bottom: 5px; }
.r3 .val, .r8 .val { padding-bottom: 5px; }
.r4 { height: 47px; }
.r5 { height: 60px; }
.r5 .lbl { align-self: start; margin-top: 20px; padding-bottom: 0; }
.r5 .val { align-self: start; margin-top: 32px; }
.r6 { height: 63px; }
.r6 .val, .r7 .val { line-height: 22px; padding-bottom: 0; min-height: 0; }
.r6 .lbl, .r7 .lbl { line-height: 22px; padding-bottom: 1px; min-height: 0; }
.r7 { height: 62px; }
.r8 { height: 60px; }
.link { color: #3a7fe6; }

.taskbar { height: 40px; flex: none; background: #262626; display: flex; align-items: stretch; color: #eee; font-family: "Open Sans", "Noto Sans", sans-serif; }
.start { width: 48px; display: flex; align-items: center; justify-content: center; flex: none; }
.start svg { width: 16px; height: 16px; }
.search { width: 288px; flex: none; background: #f0f0f0; border: 1px solid #b5b5b5; display: flex; align-items: center; padding-left: 11px; color: #222; font-size: 14.6px; }
.search svg { width: 18px; height: 18px; margin-right: 10px; }
.apps { display: flex; margin-left: 7px; }
.app-ic { display: flex; align-items: center; justify-content: center; position: relative; width: 49px; flex: none; }
.app-ic svg { width: 26px; height: 26px; }
.a-alice { margin-right: 8px; }
.on::after, .app-ic.active::after { content: ""; position: absolute; left: 4px; right: 4px; bottom: 0; height: 2px; background: #8cc6ee; }
.app-ic.active { background: #4d4d4d; }
.app-ic.active::after { left: 0; right: 0; }
.tray { margin-left: auto; margin-right: 4px; display: flex; align-items: center; padding-right: 7px; border-right: 1px solid #555; }
.t-chev { width: 13px; height: 8px; margin-right: 17px; }
.t-bat { width: 17px; height: 14px; margin-right: 16.5px; }
.t-mic { width: 12px; height: 18px; margin-right: 18.5px; }
.t-snd { width: 17px; height: 14px; margin-right: 19px; }
.t-pen { width: 17px; height: 15px; margin-right: 18.5px; }
.t-lang { font-size: 11.5px; width: 22px; white-space: nowrap; margin-right: 12px; }
.t-clock { font-size: 10.5px; line-height: 18px; text-align: center; width: 56px; margin-right: 20px; }
.t-note svg { width: 26px; height: 24px; display: block; }
```
